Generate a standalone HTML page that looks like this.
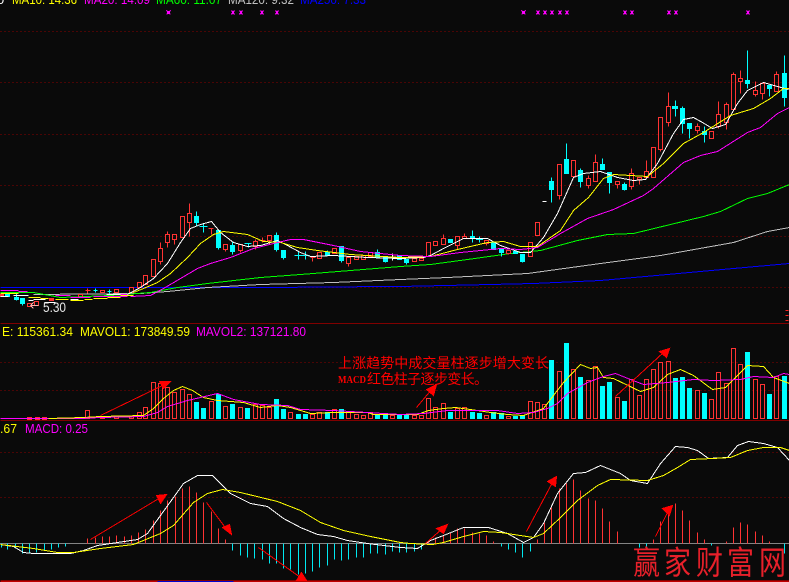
<!DOCTYPE html>
<html><head><meta charset="utf-8">
<style>
html,body{margin:0;padding:0;background:#0a0a0a;width:789px;height:582px;overflow:hidden}
svg{display:block;position:absolute;left:0;top:0}
text{font-family:"Liberation Sans",sans-serif}
.cn{font-family:"WenQuanYi Zen Hei","Noto Sans CJK SC",sans-serif}
</style></head><body>
<svg width="789" height="582" viewBox="0 0 789 582" xmlns="http://www.w3.org/2000/svg">
<rect width="789" height="582" fill="#0a0a0a"/>
<g shape-rendering="crispEdges" transform="translate(.5 .5)" fill="none">
<!-- grid -->
<path stroke="#8a0000" stroke-dasharray="1 3" d="M0 31H789M0 82H789M0 134H789M0 185H789M0 236H789M0 287H789M0 362H789M0 390H789M0 452H789M0 497H789"/>
<path stroke="#800000" d="M0 323H789M0 420H789M0 580H789"/>
<path stroke="#0000d0" d="M157 581H233"/>
<path stroke="#c00000" d="M0 581H157M233 581H789"/>
<path stroke="#fff" stroke-dasharray="1 1" d="M0 543H789"/>
<path stroke="#ff2020" d="M785 310h3M785 315h3M785 320h3"/>
<!-- markers -->
<path stroke="#ff00ff" stroke-width="1.3" d="M166 10l4 4M170 10l-4 4M167 11h2v2h-2zM231 10l3 4M234 10l-3 4M239 10l3 4M242 10l-3 4M260 10l3 4M263 10l-3 4M275 10l3 4M278 10l-3 4M521 10l4 4M525 10l-4 4M522 11h2v2h-2zM536 10l3 4M539 10l-3 4M543 10l3 4M546 10l-3 4M550 10l3 4M553 10l-3 4M558 10l3 4M561 10l-3 4M565 10l3 4M568 10l-3 4M623 10l3 4M626 10l-3 4M630 10l3 4M633 10l-3 4M667 10l3 4M670 10l-3 4M674 10l3 4M677 10l-3 4M746 10l3 4M749 10l-3 4"/>
<!-- long MAs -->
<polyline stroke="#0000ff" points="0,287 220,287 267,287 387,286 400,286 490,284 533,283 600,280 667,274 733,268 789,263"/>
<polyline stroke="#c0c0c0" points="33,294 140,293 167,291 207,287 260,284 333,282 400,279 447,277 527,273 600,263 660,255 733,242 767,231 789,227"/>
<polyline stroke="#00ff00" points="0,292 33,292 60,297 110,295 150,292 177,287 207,283 260,277 300,274 350,270 400,266 430,264 467,259 510,253 540,250 577,240 607,234 633,233 670,224 703,216 720,211 747,198 767,193 789,184"/>
<!-- red candles -->
<path stroke="#ff3333" d="M0 294h3v2h-3zM27 303h4v3h-4zM34 301h4v4h-4zM49 298h4v2h-4zM78 294h4v3h-4zM85 290h5M87 288v5M100 290h4v2h-4zM114 289h4v3h-4zM129 287h4v5h-4zM137 282h4v5h-4zM143 275h4v9h-4zM151 259h4v17h-4zM158 248h4v13h-4zM160 242V248M160 261V264M165 234h4v8h-4zM167 231V234M167 242V247M172 234h4v5h-4zM174 239V244M180 216h4v21h-4zM187 213h4v9h-4zM189 203V213M189 222V236M208 228h5M211 228V234M223 244h4v5h-4zM225 249V251M238 244h4v6h-4zM240 250V252M253 241h4v5h-4zM255 239V241M255 246V249M258 240h7M262 237V242M267 235h4v5h-4zM269 240V244M310 257h5M312 257V261M317 252h4v6h-4zM332 248h4v5h-4zM346 257h4v6h-4zM348 263V266M354 256h4v3h-4zM361 255h4v4h-4zM368 252h4v4h-4zM412 258h4v3h-4zM419 258h4v2h-4zM426 242h4v14h-4zM433 241h4v4h-4zM441 238h4v6h-4zM443 234V238M455 236h4v9h-4zM457 245V249M462 236h4v2h-4zM464 233V236M484 240h4v3h-4zM486 243V245M506 250h4v3h-4zM508 253V254M528 242h4v14h-4zM535 222h4v13h-4zM557 164h4v31h-4zM559 195V199M571 160h4v16h-4zM586 178h4v7h-4zM588 175V178M588 185V188M593 162h4v19h-4zM595 154V162M615 181h4v3h-4zM617 184V188M629 173h4v13h-4zM631 168V173M631 186V189M637 177h4v2h-4zM639 179V184M644 171h4v6h-4zM646 160V171M651 147h4v30h-4zM658 117h4v32h-4zM660 149V151M666 106h4v16h-4zM668 92V106M668 122V126M695 126h4v4h-4zM697 123V126M697 130V133M709 131h4v7h-4zM716 114h4v12h-4zM718 101V114M718 126V128M724 104h4v18h-4zM726 102V104M726 122V129M731 74h4v35h-4zM733 72V74M733 109V110M738 78h4v3h-4zM740 70V78M740 81V93M753 90h4v4h-4zM755 81V90M755 94V96M760 83h4v10h-4zM762 93V99M774 74h4v17h-4zM776 71V74"/>
<path stroke="#ff3333" fill="#ff3333" d="M0 294h3v2h-3zM49 298h4v2h-4z"/>
<!-- cyan candles -->
<path stroke="#00ffff" fill="#00ffff" d="M5 294h4v2h-4zM14 297h4v2h-4zM16 293V300M20 298h4v5h-4zM22 303V305M93 290h4M95 288V292M107 291h4M109 289V293M194 216h4v6h-4zM196 211V216M196 222V225M199 226h8M203 223V232M216 230h4v17h-4zM218 247V249M230 245h4v6h-4zM232 241V245M232 251V254M244 243h7M248 243V247M274 235h4v14h-4zM276 232V235M276 249V251M281 250h4v7h-4zM283 257V259M294 255h8M298 251V259M301 255h8M305 251V259M325 252h4v3h-4zM327 250V252M339 246h4v14h-4zM341 260V262M375 252h4v5h-4zM377 249V252M383 257h4v4h-4zM385 261V262M397 255h4v4h-4zM404 259h4v3h-4zM406 262V264M448 239h4v3h-4zM470 236h4v2h-4zM472 230V242M476 238h6v1h-6zM479 236V242M491 242h4v7h-4zM499 249h4v3h-4zM501 252V256M513 251h4v2h-4zM520 254h4v7h-4zM522 261V262M549 181h4v8h-4zM551 177V202M564 159h4v14h-4zM566 143V159M578 170h4v11h-4zM580 168V187M600 164h4v5h-4zM602 158V164M607 172h4v10h-4zM609 182V193M622 184h4v5h-4zM624 182V190M672 106h5v2h-5zM675 100V116M680 108h4v15h-4zM682 106V133M687 123h4v5h-4zM689 128V138M702 131h4v3h-4zM704 126V142M745 80h4v3h-4zM747 50V88M767 85h4v3h-4zM769 88V96M782 73h4v24h-4zM784 55V106"/>
<path stroke="#fff" d="M542 201h4M388 257h8M392 253V260"/>
<!-- short MAs left -->
<path stroke="#ff00ff" stroke-width="1.4" d="M0 290H18M18 291H27M55 295H70M70 297H90M93 296H107M107 294H127M127 296H100"/>
<path stroke="#ffff00" stroke-width="1.4" d="M0 293H18M28 297H40M40 298H48M55 299H68M70 300H83M84 299H92M93 298H107M107 297H120M120 295H133"/>
<path stroke="#fff" stroke-width="1.4" d="M0 296H8M13 295H28M33 299H45M28 300H33M44 302H55M70 299H78M106 294H120"/>
<polyline stroke="#fff" points="127,294 140,287 153,278 167,263 180,242 190,228 200,224 211,221 220,232 233,242 247,246 260,245 277,240 287,245 300,252 310,256 333,255 367,257 400,258 423,257 430,255 443,248 463,238 487,238 500,245 520,252 530,252 543,237 557,213 573,177 583,173 600,171 617,177 633,180 645,179 657,163 673,133 683,119 693,117 702,122 712,128 725,124 737,103 747,90 763,82 777,86 788,89"/>
<polyline stroke="#ffff00" points="133,292 143,288 157,282 170,273 187,257 200,243 213,234 223,231 247,234 263,241 280,242 297,247 317,250 350,254 400,257 430,256 457,249 487,242 503,241 520,246 537,246 560,230 573,210 588,197 603,178 613,174 647,176 663,163 683,143 703,132 730,115 753,108 770,98 783,88 789,88"/>
<polyline stroke="#ff00ff" points="130,296 150,295 163,288 180,278 197,268 210,263 230,257 253,248 277,242 290,239 303,239 333,245 360,251 400,255 430,256 460,252 480,250 500,248 520,249 537,247 560,233 587,218 613,209 643,195 653,188 683,162 700,155 717,151 747,132 760,127 777,113 789,107"/>
<!-- volume red -->
<path stroke="#ff3333" d="M85 410h4v8h-4zM100 416h4v2h-4zM114 416h4v2h-4zM129 416h4v2h-4zM137 412h4v6h-4zM143 407h4v11h-4zM151 382h4v36h-4zM158 383h4v35h-4zM165 387h4v31h-4zM172 392h4v26h-4zM180 389h4v29h-4zM187 394h4v24h-4zM209 401h4v17h-4zM223 406h4v12h-4zM238 407h4v11h-4zM253 404h4v14h-4zM260 405h4v13h-4zM267 407h4v11h-4zM288 412h4v6h-4zM310 414h4v4h-4zM317 412h4v6h-4zM332 409h4v9h-4zM346 412h4v6h-4zM354 414h4v4h-4zM361 415h4v3h-4zM368 412h4v6h-4zM390 415h4v3h-4zM412 415h4v3h-4zM419 415h4v3h-4zM426 398h4v20h-4zM433 407h4v11h-4zM441 403h4v15h-4zM455 408h4v10h-4zM462 407h4v11h-4zM484 415h4v3h-4zM506 416h4v2h-4zM528 401h4v17h-4zM535 402h4v16h-4zM542 404h4v14h-4zM557 371h4v47h-4zM571 369h4v49h-4zM586 380h4v38h-4zM593 366h4v52h-4zM615 397h4v21h-4zM629 379h4v39h-4zM637 395h4v23h-4zM644 379h4v39h-4zM651 369h4v49h-4zM658 362h4v56h-4zM666 361h4v57h-4zM695 390h4v28h-4zM709 399h4v19h-4zM716 372h4v46h-4zM724 383h4v35h-4zM731 348h4v70h-4zM738 364h4v54h-4zM753 379h4v39h-4zM760 384h4v34h-4zM774 376h4v42h-4z"/>
<path stroke="#00ffff" fill="#00ffff" d="M194 402h4v16h-4zM201 408h4v10h-4zM216 394h4v24h-4zM230 404h4v14h-4zM245 408h4v10h-4zM274 399h4v19h-4zM281 409h4v9h-4zM296 414h4v4h-4zM303 414h4v4h-4zM325 412h4v6h-4zM339 409h4v9h-4zM375 414h4v4h-4zM383 415h4v3h-4zM397 414h4v4h-4zM404 415h4v3h-4zM448 412h4v6h-4zM470 412h4v6h-4zM477 413h4v5h-4zM491 412h4v6h-4zM499 413h4v5h-4zM513 416h4v2h-4zM520 415h4v3h-4zM549 360h4v58h-4zM564 343h4v75h-4zM578 377h4v41h-4zM600 386h4v32h-4zM607 382h4v36h-4zM622 401h4v17h-4zM673 378h4v40h-4zM680 377h4v41h-4zM687 388h4v30h-4zM702 393h4v25h-4zM745 352h4v66h-4zM767 394h4v24h-4zM782 376h4v42h-4z"/>
<path stroke="#ff3333" fill="#ff3333" d="M27 417h4v2h-4zM35 417h4v2h-4zM42 417h4v2h-4z"/>
<path stroke="#ff00ff" stroke-width="1.4" d="M0 418H80"/>
<polyline stroke="#ffff00" points="48,418 83,417 100,416 143,415 153,408 163,398 173,390 182,386 192,390 203,397 217,400 243,402 260,407 277,405 290,407 310,413 333,412 367,412 373,414 400,414 417,414 428,410 443,408 455,407 477,410 490,412 507,414 523,415 543,408 553,395 563,382 580,364 590,368 597,367 603,377 613,378 640,391 653,387 667,374 680,369 693,375 712,389 725,387 747,365 763,366 773,377 789,383"/>
<polyline stroke="#ff00ff" points="80,418 100,417 143,416 157,412 167,406 187,400 200,397 217,393 233,399 260,404 287,405 300,409 333,410 400,414 423,413 447,410 497,410 517,413 533,412 547,408 557,403 567,393 587,382 603,376 615,373 630,379 643,384 667,382 693,379 713,380 740,379 753,376 773,377 783,373 789,374"/>
<!-- MACD bars -->
<path stroke="#ff3333" d="M87 538V543M95 537V543M102 536V543M109 536V543M116 535V543M124 536V543M131 535V543M138 532V543M145 529V543M153 520V543M160 510V543M167 500V543M175 496V543M182 488V543M189 486V543M196 492V543M203 502V543M211 511V543M218 528V543M225 539V543M428 541V543M435 537V543M443 535V543M450 532V543M457 528V543M464 528V543M472 532V543M479 533V543M486 535V543M493 541V543M537 539V543M544 522V543M551 507V543M559 488V543M566 483V543M573 479V543M580 490V543M588 498V543M595 500V543M602 508V543M609 521V543M617 531V543M653 539V543M660 521V543M668 510V543M675 503V543M682 510V543M689 520V543M697 532V543M704 539V543M726 541V543M733 527V543M740 522V543M747 524V543M755 531V543M762 535V543M769 541V543"/>
<path stroke="#00e8f0" d="M1 543V547M7 543V549M15 543V548M22 543V553M29 543V553M36 543V552M44 543V550M51 543V549M58 543V547M65 543V546M232 543V550M240 543V555M247 543V557M254 543V558M262 543V559M269 543V563M276 543V563M283 543V568M290 543V569M298 543V574M305 543V573M312 543V571M319 543V567M327 543V565M334 543V559M341 543V560M348 543V559M356 543V557M363 543V557M370 543V553M377 543V553M385 543V554M392 543V551M399 543V552M406 543V552M414 543V551M421 543V549M501 543V546M508 543V549M515 543V552M522 543V557M530 543V551M639 543V547M646 543V547M711 543V545M784 543V553"/>
<polyline stroke="#fff" points="0,544 13,546 23,552 33,553 70,553 83,550 97,545 137,539 147,533 160,515 173,497 183,483 197,475 212,475 230,493 250,503 267,506 283,518 300,527 317,534 333,536 347,540 367,543 400,547 417,548 430,540 443,535 463,527 488,527 507,533 523,542 533,537 543,523 557,493 573,473 585,472 600,465 620,473 630,480 647,483 660,463 675,446 687,447 697,450 708,458 727,457 737,445 748,441 763,443 777,447 789,460"/>
<polyline stroke="#ffff00" points="0,544 33,548 57,552 73,552 100,548 133,544 160,533 173,525 193,502 207,493 222,489 240,492 277,501 300,510 320,522 343,530 370,536 400,542 410,543 432,544 443,542 463,536 483,531 500,532 533,537 543,533 560,517 577,500 597,485 610,479 647,480 663,475 677,467 690,459 712,458 730,457 747,450 763,447 780,447 789,450"/>
<!-- arrows -->
<g stroke="#ff0000">
<path d="M100 415L162 385M416 407L432 388M615 396L663 352M90 539L160 497M206 502L227 530M258 547L300 577M425 543L442 528M526 531L553 480M655 536L668 510"/>
</g>
<path fill="#ff0000" stroke="#ff0000" d="M159 381L170 381L163 388zM426 389L436 384L433 395zM659 351L669 348L666 357zM156 495L166 494L160 503zM222 527L229 524L231 534zM296 580L306 580L301 572zM436 528L447 524L443 533zM547 481L556 476L555 486zM662 508L672 505L669 515z"/>
<path stroke="#ffb0b0" d="M30 305h8M30 305l3-3M30 305l3 3"/>
</g>
<!-- text -->
<g font-size="13">
<text x="-3" y="4" fill="#fff">0</text>
<text x="12" y="4" fill="#ffff00" textLength="65" lengthAdjust="spacingAndGlyphs">MA10: 14.36</text>
<text x="84" y="4" fill="#ff00ff" textLength="66" lengthAdjust="spacingAndGlyphs">MA20: 14.09</text>
<text x="156" y="4" fill="#00ff00" textLength="66" lengthAdjust="spacingAndGlyphs">MA60: 11.07</text>
<text x="228" y="4" fill="#c0c0c0" textLength="66" lengthAdjust="spacingAndGlyphs">MA120: 9.32</text>
<text x="300" y="4" fill="#0000ff" textLength="66" lengthAdjust="spacingAndGlyphs">MA250: 7.33</text>
<text x="43" y="312" font-size="14" fill="#e8e8e8" textLength="23" lengthAdjust="spacingAndGlyphs">5.30</text>
<text x="2" y="336" fill="#ffff00" textLength="71" lengthAdjust="spacingAndGlyphs">E: 115361.34</text>
<text x="80" y="336" fill="#ffff00" textLength="110" lengthAdjust="spacingAndGlyphs">MAVOL1: 173849.59</text>
<text x="196" y="336" fill="#ff00ff" textLength="110" lengthAdjust="spacingAndGlyphs">MAVOL2: 137121.80</text>
<text x="0" y="433" fill="#ffff00" textLength="17" lengthAdjust="spacingAndGlyphs">.67</text>
<text x="25" y="433" fill="#ff00ff" textLength="63" lengthAdjust="spacingAndGlyphs">MACD: 0.25</text>
</g>
<text class="cn" x="338" y="368" font-size="14" fill="#ff0000" textLength="211" lengthAdjust="spacing">上涨趋势中成交量柱逐步增大变长</text>
<text x="338" y="383" font-size="11" font-weight="bold" fill="#ff0000" textLength="28" lengthAdjust="spacingAndGlyphs" style="font-family:'Liberation Serif',serif">MACD</text>
<text class="cn" x="367" y="384" font-size="14" fill="#ff0000" textLength="121" lengthAdjust="spacing">红色柱子逐步变长。</text>
<g class="cn" font-size="27" fill="#e8202a">
<text class="cn" transform="translate(633 574) scale(1 1.2)">赢</text>
<text class="cn" transform="translate(664 574) scale(1 1.2)">家</text>
<text class="cn" transform="translate(696 574) scale(1 1.2)">财</text>
<text class="cn" transform="translate(727 574) scale(1 1.2)">富</text>
<text class="cn" transform="translate(759 574) scale(1 1.2)">网</text>
</g>
</svg>
</body></html>
